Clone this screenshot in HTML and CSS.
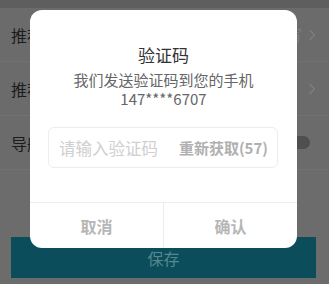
FILE: index.html
```html
<!DOCTYPE html>
<html lang="zh">
<head>
<meta charset="utf-8">
<link rel="stylesheet" href="styles.css">
</head>
<body>
<div class="page">
  <div class="topbar"></div>
  <div class="row">
    <span class="label">推荐人</span>
    <span class="value">未填写</span>
    <svg class="chev" width="8" height="12" viewBox="0 0 8 12"><path d="M1.5 1 L6.5 6 L1.5 11" fill="none" stroke="#7f7f7f" stroke-width="1.2"/></svg>
  </div>
  <div class="row">
    <span class="label">推荐码</span>
    <span class="value"></span>
    <svg class="chev" width="8" height="12" viewBox="0 0 8 12"><path d="M1.5 1 L6.5 6 L1.5 11" fill="none" stroke="#7f7f7f" stroke-width="1.2"/></svg>
  </div>
  <div class="row">
    <span class="label">导航</span>
    <span class="toggle"></span>
  </div>
  <div class="spacer"></div>
  <div class="savebar"><span>保存</span></div>
</div>

<div class="dialog">
  <div class="title">验证码</div>
  <div class="desc">
    <div class="desc-line">我们发送验证码到您的手机</div>
    <div class="desc-line">147****6707</div>
  </div>
  <div class="field">
    <span class="placeholder">请输入验证码</span>
    <span class="resend">重新获取(57)</span>
  </div>
  <div class="actions">
    <div class="btn">取消</div>
    <div class="btn btn-ok">确认</div>
  </div>
</div>
</body>
</html>
```

FILE: styles.css
```css
* { box-sizing: border-box; }
html, body { margin: 0; padding: 0; }
body {
  width: 329px;
  height: 284px;
  overflow: hidden;
  background: #6c6c6c;
  font-family: "Noto Sans CJK SC", "Noto Sans", sans-serif;
  position: relative;
}
.page {
  display: flex;
  flex-direction: column;
  height: 284px;
}
.topbar {
  height: 8px;
  background: #5e5e5e;
}
.row {
  height: 54px;
  display: flex;
  align-items: center;
  padding: 0 13px 0 11px;
  border-bottom: 1px solid #717171;
  background: #6b6b6b;
}
.label {
  font-size: 16px;
  color: #1c1c1c;
  flex: 0 0 auto;
}
.value {
  flex: 1 1 auto;
  text-align: right;
  font-size: 15px;
  color: #7e7e7e;
  margin-right: 6px;
}
.chev { flex: 0 0 auto; }
.toggle {
  margin-left: auto;
  width: 36px;
  height: 13px;
  border-radius: 7px;
  background: #4f4f4f;
  margin-right: 6px;
}
.spacer {
  flex: 0 0 67px;
}
.savebar {
  margin: 0 13px 0 11px;
  height: 41px;
  background: #0c4d5b;
  display: flex;
  align-items: center;
  justify-content: center;
}
.savebar span {
  font-size: 16px;
  color: #55898f;
}

.dialog {
  position: absolute;
  left: 30px;
  top: 10px;
  width: 267px;
  height: 238px;
  background: #fff;
  border-radius: 12px;
  display: flex;
  flex-direction: column;
  padding-top: 33px;
  overflow: hidden;
}
.title {
  text-align: center;
  font-size: 17px;
  line-height: 24px;
  color: #333;
}
.desc {
  margin-top: 3px;
  text-align: center;
  font-size: 15px;
  line-height: 19px;
  color: #666;
}
.field {
  margin: 19px 19px 0 18px;
  height: 41px;
  border: 1px solid #ededed;
  border-radius: 6px;
  display: flex;
  align-items: center;
  justify-content: space-between;
  padding: 0 9px 0 10px;
}
.placeholder {
  font-size: 16.5px;
  color: #cfcfcf;
}
.resend {
  font-size: 15px;
  font-weight: bold;
  color: #b0b0b0;
}
.actions {
  margin-top: auto;
  height: 46px;
  border-top: 1px solid #ececec;
  display: flex;
}
.btn {
  flex: 1 1 0;
  display: flex;
  align-items: center;
  justify-content: center;
  font-size: 16px;
  font-weight: bold;
  color: #b6b6b6;
}
.btn-ok {
  border-left: 1px solid #ececec;
}
```
